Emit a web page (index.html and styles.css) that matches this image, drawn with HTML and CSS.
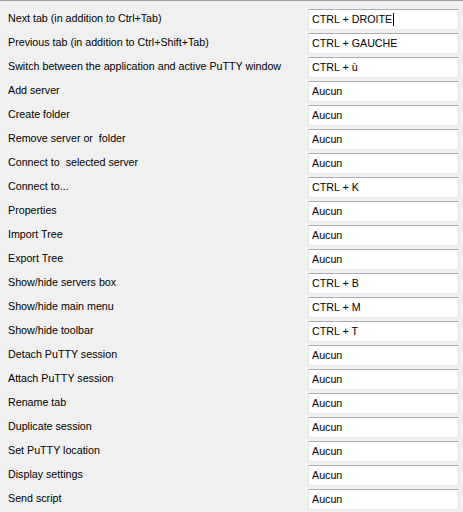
FILE: index.html
```html
<!DOCTYPE html>
<html>
<head>
<meta charset="utf-8">
<link rel="stylesheet" href="styles.css">
</head>
<body>
<div class="panel">
  <div class="row"><span class="label">Next tab (in addition to Ctrl+Tab)</span><div class="field">CTRL + DROITE<span class="caret"></span></div></div>
  <div class="row"><span class="label">Previous tab (in addition to Ctrl+Shift+Tab)</span><div class="field">CTRL + GAUCHE</div></div>
  <div class="row"><span class="label">Switch between the application and active PuTTY window</span><div class="field">CTRL + ù</div></div>
  <div class="row"><span class="label">Add server</span><div class="field">Aucun</div></div>
  <div class="row"><span class="label">Create folder</span><div class="field">Aucun</div></div>
  <div class="row"><span class="label">Remove server or&nbsp; folder</span><div class="field">Aucun</div></div>
  <div class="row"><span class="label">Connect to&nbsp; selected server</span><div class="field">Aucun</div></div>
  <div class="row"><span class="label">Connect to...</span><div class="field">CTRL + K</div></div>
  <div class="row"><span class="label">Properties</span><div class="field">Aucun</div></div>
  <div class="row"><span class="label">Import Tree</span><div class="field">Aucun</div></div>
  <div class="row"><span class="label">Export Tree</span><div class="field">Aucun</div></div>
  <div class="row"><span class="label">Show/hide servers box</span><div class="field">CTRL + B</div></div>
  <div class="row"><span class="label">Show/hide main menu</span><div class="field">CTRL + M</div></div>
  <div class="row"><span class="label">Show/hide toolbar</span><div class="field">CTRL + T</div></div>
  <div class="row"><span class="label">Detach PuTTY session</span><div class="field">Aucun</div></div>
  <div class="row"><span class="label">Attach PuTTY session</span><div class="field">Aucun</div></div>
  <div class="row"><span class="label">Rename tab</span><div class="field">Aucun</div></div>
  <div class="row"><span class="label">Duplicate session</span><div class="field">Aucun</div></div>
  <div class="row"><span class="label">Set PuTTY location</span><div class="field">Aucun</div></div>
  <div class="row"><span class="label">Display settings</span><div class="field">Aucun</div></div>
  <div class="row"><span class="label">Send script</span><div class="field">Aucun</div></div>
</div>
</body>
</html>
```
FILE: styles.css
```css
html, body {
  margin: 0;
  padding: 0;
  background: #f0f0f0;
}
body {
  width: 463px;
  height: 512px;
  overflow: hidden;
  font-family: "Liberation Sans", Arial, sans-serif;
  font-size: 10.7px;
  color: #000;
}
.panel {
  border-top: 1px solid #a0a0a0;
  padding-top: 8px;
}
.row {
  display: flex;
  align-items: flex-start;
  height: 21px;
  margin-bottom: 3px;
}
.label {
  width: 300px;
  padding-left: 8px;
  line-height: 19px;
  white-space: nowrap;
}
.field {
  box-sizing: border-box;
  width: 151px;
  height: 21px;
  background: #fff;
  border: 1px solid #e2e3ea;
  border-top-color: #abadb3;
  border-bottom-color: #e3e9ef;
  padding-left: 3px;
  padding-bottom: 1px;
  white-space: nowrap;
  display: flex;
  align-items: center;
}
.caret {
  display: inline-block;
  width: 1px;
  height: 13px;
  background: #000;
  margin-left: 1px;
}
```
